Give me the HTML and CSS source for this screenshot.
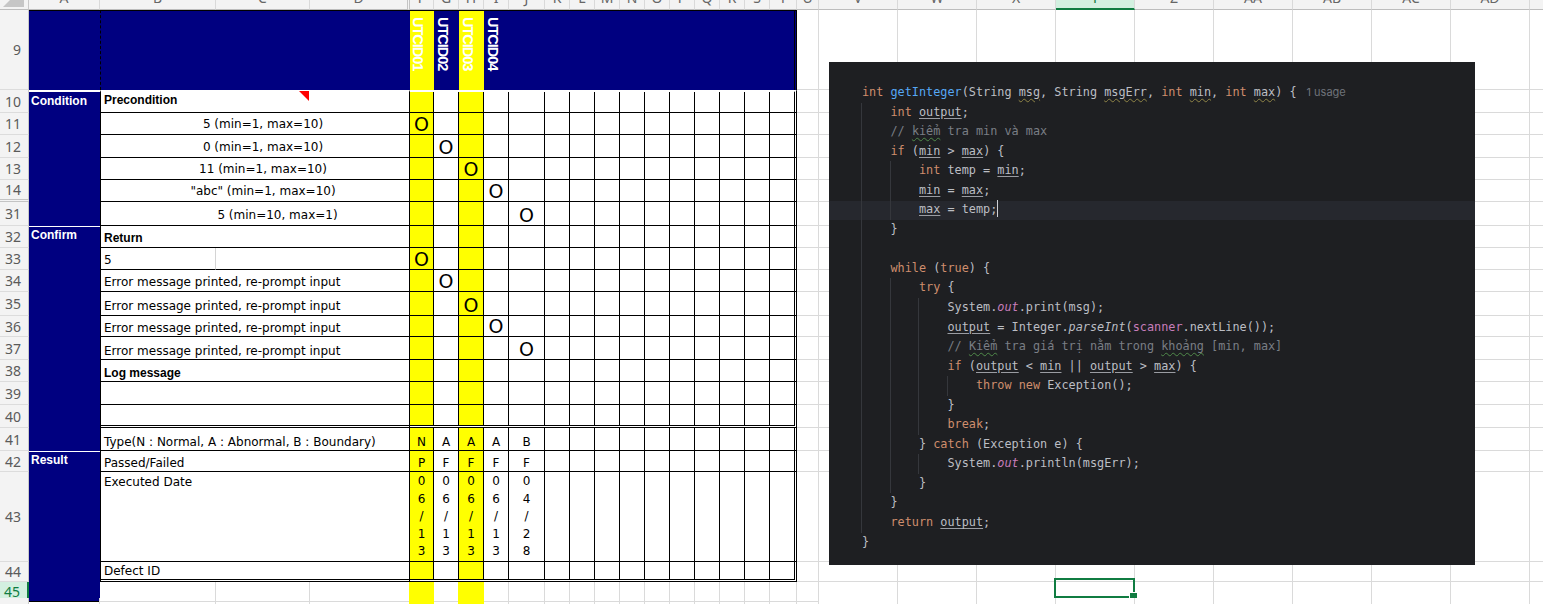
FILE: index.html
```html
<!DOCTYPE html>
<html>
<head>
<meta charset="utf-8">
<link rel="stylesheet" href="styles.css">
</head>
<body>
<div class="sheet">
  <div class="row hdr">
    <div class="corner"><svg width="29" height="10" viewBox="0 0 29 10"><polygon points="3,7 24,7 24,-14" fill="#c6c6c6"/></svg></div>
    <div class="ch"><span>A</span></div><div class="ch"><span>B</span></div><div class="ch"><span>C</span></div><div class="ch hid"><span>D</span></div>
    <div class="ch"><span>F</span></div><div class="ch"><span>G</span></div><div class="ch"><span>H</span></div><div class="ch"><span>I</span></div><div class="ch"><span>J</span></div>
    <div class="ch"><span>K</span></div><div class="ch"><span>L</span></div><div class="ch"><span>M</span></div><div class="ch"><span>N</span></div><div class="ch"><span>O</span></div>
    <div class="ch"><span>P</span></div><div class="ch"><span>Q</span></div><div class="ch"><span>R</span></div><div class="ch"><span>S</span></div><div class="ch"><span>T</span></div>
    <div class="ch"><span>U</span></div><div class="ch"><span>V</span></div><div class="ch"><span>W</span></div><div class="ch"><span>X</span></div><div class="ch on"><span>Y</span></div>
    <div class="ch"><span>Z</span></div><div class="ch"><span>AA</span></div><div class="ch"><span>AB</span></div><div class="ch"><span>AC</span></div><div class="ch"><span>AD</span></div><div class="ch"><span>AE</span></div>
  </div>

  <div class="row h80">
    <div class="rh">9</div>
    <div class="nv tt"></div>
    <div class="nv tt pbrk s3"></div>
    <div class="m9"><span class="vt">UTCID01</span><span class="vt">UTCID02</span><span class="vt">UTCID03</span><span class="vt">UTCID04</span></div>
    <div class="gl"></div><div class="rest"></div>
  </div>

  <div class="row h23">
    <div class="rh">10</div>
    <div class="nv lab w2">Condition</div>
    <div class="cl bl w2 bold pb4">Precondition</div>
    <div class="cl w2 cmt"></div>
    <div class="cl br w2"></div>
    <div class="m w2"><i></i><i></i><i></i><i></i><i></i><i></i><i></i><i></i><i></i><i></i><i></i><i></i><i></i><i></i><i></i></div>
    <div class="gl"></div><div class="rest"></div>
  </div>

  <div class="row h22">
    <div class="rh">11</div>
    <div class="nv"></div>
    <div class="cl bd ctr pb2">5 (min=1, max=10)</div>
    <div class="m"><i class="o">O</i><i></i><i></i><i></i><i></i><i></i><i></i><i></i><i></i><i></i><i></i><i></i><i></i><i></i><i></i></div>
    <div class="gl"></div><div class="rest"></div>
  </div>

  <div class="row h23">
    <div class="rh">12</div>
    <div class="nv"></div>
    <div class="cl bd ctr pb2">0 (min=1, max=10)</div>
    <div class="m"><i></i><i class="o">O</i><i></i><i></i><i></i><i></i><i></i><i></i><i></i><i></i><i></i><i></i><i></i><i></i><i></i></div>
    <div class="gl"></div><div class="rest"></div>
  </div>

  <div class="row h22">
    <div class="rh">13</div>
    <div class="nv"></div>
    <div class="cl bd ctr pb2">11 (min=1, max=10)</div>
    <div class="m"><i></i><i></i><i class="o">O</i><i></i><i></i><i></i><i></i><i></i><i></i><i></i><i></i><i></i><i></i><i></i><i></i></div>
    <div class="gl"></div><div class="rest"></div>
  </div>

  <div class="row h22">
    <div class="rh dbl">14</div>
    <div class="nv"></div>
    <div class="cl bd ctr pb2">"abc" (min=1, max=10)</div>
    <div class="m"><i></i><i></i><i></i><i class="o">O</i><i></i><i></i><i></i><i></i><i></i><i></i><i></i><i></i><i></i><i></i><i></i></div>
    <div class="gl"></div><div class="rest"></div>
  </div>

  <div class="row h24">
    <div class="rh">31</div>
    <div class="nv"></div>
    <div class="cl bd ctr2 pb2">5 (min=10, max=1)</div>
    <div class="m"><i></i><i></i><i></i><i></i><i class="o">O</i><i></i><i></i><i></i><i></i><i></i><i></i><i></i><i></i><i></i><i></i></div>
    <div class="gl"></div><div class="rest"></div>
  </div>

  <div class="row h22">
    <div class="rh">32</div>
    <div class="nv lab w1">Confirm</div>
    <div class="cl bd bold">Return</div>
    <div class="m"><i></i><i></i><i></i><i></i><i></i><i></i><i></i><i></i><i></i><i></i><i></i><i></i><i></i><i></i><i></i></div>
    <div class="gl"></div><div class="rest"></div>
  </div>

  <div class="row h22">
    <div class="rh">33</div>
    <div class="nv"></div>
    <div class="cl bl gr">5</div>
    <div class="cl br s2"></div>
    <div class="m"><i class="o">O</i><i></i><i></i><i></i><i></i><i></i><i></i><i></i><i></i><i></i><i></i><i></i><i></i><i></i><i></i></div>
    <div class="gl"></div><div class="rest"></div>
  </div>

  <div class="row h22">
    <div class="rh">34</div>
    <div class="nv"></div>
    <div class="cl bd">Error message printed, re-prompt input</div>
    <div class="m"><i></i><i class="o">O</i><i></i><i></i><i></i><i></i><i></i><i></i><i></i><i></i><i></i><i></i><i></i><i></i><i></i></div>
    <div class="gl"></div><div class="rest"></div>
  </div>

  <div class="row h24">
    <div class="rh">35</div>
    <div class="nv"></div>
    <div class="cl bd">Error message printed, re-prompt input</div>
    <div class="m"><i></i><i></i><i class="o">O</i><i></i><i></i><i></i><i></i><i></i><i></i><i></i><i></i><i></i><i></i><i></i><i></i></div>
    <div class="gl"></div><div class="rest"></div>
  </div>

  <div class="row h21">
    <div class="rh">36</div>
    <div class="nv"></div>
    <div class="cl bd pb0">Error message printed, re-prompt input</div>
    <div class="m"><i></i><i></i><i></i><i class="o">O</i><i></i><i></i><i></i><i></i><i></i><i></i><i></i><i></i><i></i><i></i><i></i></div>
    <div class="gl"></div><div class="rest"></div>
  </div>

  <div class="row h23">
    <div class="rh">37</div>
    <div class="nv"></div>
    <div class="cl bd pb0">Error message printed, re-prompt input</div>
    <div class="m"><i></i><i></i><i></i><i></i><i class="o">O</i><i></i><i></i><i></i><i></i><i></i><i></i><i></i><i></i><i></i><i></i></div>
    <div class="gl"></div><div class="rest"></div>
  </div>

  <div class="row h22">
    <div class="rh">38</div>
    <div class="nv"></div>
    <div class="cl bd bold pb0">Log message</div>
    <div class="m"><i></i><i></i><i></i><i></i><i></i><i></i><i></i><i></i><i></i><i></i><i></i><i></i><i></i><i></i><i></i></div>
    <div class="gl"></div><div class="rest"></div>
  </div>

  <div class="row h23">
    <div class="rh">39</div>
    <div class="nv"></div>
    <div class="cl bd"></div>
    <div class="m"><i></i><i></i><i></i><i></i><i></i><i></i><i></i><i></i><i></i><i></i><i></i><i></i><i></i><i></i><i></i></div>
    <div class="gl"></div><div class="rest"></div>
  </div>

  <div class="row h23">
    <div class="rh">40</div>
    <div class="nv"></div>
    <div class="cl bd db"></div>
    <div class="m db"><i></i><i></i><i></i><i></i><i></i><i></i><i></i><i></i><i></i><i></i><i></i><i></i><i></i><i></i><i></i></div>
    <div class="gl"></div><div class="rest"></div>
  </div>

  <div class="row h23">
    <div class="rh">41</div>
    <div class="nv"></div>
    <div class="cl bd pb0">Type(N : Normal, A : Abnormal, B : Boundary)</div>
    <div class="m tc"><i>N</i><i>A</i><i>A</i><i>A</i><i>B</i><i></i><i></i><i></i><i></i><i></i><i></i><i></i><i></i><i></i><i></i></div>
    <div class="gl"></div><div class="rest"></div>
  </div>

  <div class="row h21">
    <div class="rh">42</div>
    <div class="nv lab w1">Result</div>
    <div class="cl bd pb0">Passed/Failed</div>
    <div class="m tc"><i>P</i><i>F</i><i>F</i><i>F</i><i>F</i><i></i><i></i><i></i><i></i><i></i><i></i><i></i><i></i><i></i><i></i></div>
    <div class="gl"></div><div class="rest"></div>
  </div>

  <div class="row h90">
    <div class="rh">43</div>
    <div class="nv"></div>
    <div class="cl bd top">Executed Date</div>
    <div class="m dt"><i><span>06/13</span></i><i><span>06/13</span></i><i><span>06/13</span></i><i><span>06/13</span></i><i><span>04/28</span></i><i></i><i></i><i></i><i></i><i></i><i></i><i></i><i></i><i></i><i></i></div>
    <div class="gl"></div><div class="rest"></div>
  </div>

  <div class="row h20">
    <div class="rh">44</div>
    <div class="nv"></div>
    <div class="cl bd db pb0">Defect ID</div>
    <div class="m db"><i></i><i></i><i></i><i></i><i></i><i></i><i></i><i></i><i></i><i></i><i></i><i></i><i></i><i></i><i></i></div>
    <div class="gl"></div><div class="rest"></div>
  </div>

  <div class="row h16">
    <div class="rh on">45</div>
    <div class="nv bk"></div>
    <div class="g"></div><div class="g"></div><div class="g ny"></div>
    <div class="mg"><i></i><i></i><i></i><i></i><i></i><i></i><i></i><i></i><i></i><i></i><i></i><i></i><i></i><i></i><i></i></div>
    <div class="gl"></div><div class="rest"><div class="selbox"></div></div>
  </div>

  <div class="row h22">
    <div class="rh">46</div>
    <div class="g"></div>
    <div class="g"></div><div class="g"></div><div class="g ny"></div>
    <div class="mg"><i></i><i></i><i></i><i></i><i></i><i></i><i></i><i></i><i></i><i></i><i></i><i></i><i></i><i></i><i></i></div>
    <div class="gl"></div><div class="rest"></div>
  </div>

  <div class="code">
    <div class="curline"></div>
    <div class="ln"><span class="k">int</span> <span class="fn">getInteger</span>(String <span class="w">msg</span>, String <span class="w">msgErr</span>, <span class="k">int</span> <span class="w">min</span>, <span class="k">int</span> <span class="w">max</span>) {<span class="hint">1 usage</span></div>
    <div class="blk">
      <div class="ln"><span class="k">int</span> <span class="u">output</span>;</div>
      <div class="ln"><span class="cm">// <span class="gw">kiểm</span> tra min và max</span></div>
      <div class="ln"><span class="k">if</span> (<span class="u">min</span> &gt; <span class="u">max</span>) {</div>
      <div class="blk">
        <div class="ln"><span class="k">int</span> temp = <span class="u">min</span>;</div>
        <div class="ln"><span class="u">min</span> = <span class="u">max</span>;</div>
        <div class="ln"><span class="u">max</span> = temp;<span class="caret"></span></div>
      </div>
      <div class="ln">}</div>
      <div class="ln"> </div>
      <div class="ln"><span class="k">while</span> (<span class="k">true</span>) {</div>
      <div class="blk">
        <div class="ln"><span class="k">try</span> {</div>
        <div class="blk">
          <div class="ln">System.<span class="fd it">out</span>.print(msg);</div>
          <div class="ln"><span class="u">output</span> = Integer.<span class="it">parseInt</span>(<span class="fd">scanner</span>.nextLine());</div>
          <div class="ln"><span class="cm">// <span class="gw">Kiểm</span> tra giá trị nằm trong <span class="gw">khoảng</span> [min, max]</span></div>
          <div class="ln"><span class="k">if</span> (<span class="u">output</span> &lt; <span class="u">min</span> || <span class="u">output</span> &gt; <span class="u">max</span>) {</div>
          <div class="blk">
            <div class="ln"><span class="k">throw new</span> Exception();</div>
          </div>
          <div class="ln">}</div>
          <div class="ln"><span class="k">break</span>;</div>
        </div>
        <div class="ln">} <span class="k">catch</span> (Exception e) {</div>
        <div class="blk">
          <div class="ln">System.<span class="fd it">out</span>.println(msgErr);</div>
        </div>
        <div class="ln">}</div>
      </div>
      <div class="ln">}</div>
      <div class="ln"><span class="k">return</span> <span class="u">output</span>;</div>
    </div>
    <div class="ln">}</div>
  </div>
</div>
</body>
</html>
```

FILE: styles.css
```css
* { box-sizing: border-box; margin: 0; padding: 0; }
html, body { width: 1543px; height: 604px; overflow: hidden; background: #fff; }
body { font-family: "DejaVu Sans", sans-serif; font-size: 12px; color: #000; }

.sheet { position: relative; width: 1543px; height: 604px; overflow: hidden; }

.row {
  display: grid;
  grid-template-columns: 29px 71px 116px 94px 100px 24px 25px 25px 25px 36px repeat(9, 25px) 27px 22px repeat(10, 79px);
}
.hdr { height: 10px; }
.h80 { height: 80px; } .h24 { height: 24px; } .h23 { height: 23px; } .h22 { height: 22px; }
.h21 { height: 21px; } .h20 { height: 20px; } .h16 { height: 16px; } .h90 { height: 90px; }

/* column header */
.corner { background: #f3f3f3; border-right: 1px solid #c8c8c8; border-bottom: 1px solid #bdbdbd; overflow: hidden; }
.corner svg { display: block; }
.ch {
  background: #f3f3f3; border-right: 1px solid #d9d9d9; border-bottom: 1px solid #bdbdbd;
  overflow: hidden; text-align: center;
  font-family: "Noto Sans", sans-serif; font-size: 14px; color: #666;
}
.ch span { display: block; line-height: 14px; margin-top: -9px; }
.ch.hid { border-right: 3px double #c4c4c4; }
.ch.on { background: #d3f0e0; border-bottom: 2px solid #107c41; color: #107c41; }

/* row header */
.rh {
  background: #f3f3f3; border-right: 1px solid #c8c8c8; border-bottom: 1px solid #dcdcdc;
  display: flex; align-items: center; justify-content: flex-end; padding-right: 7px;
  font-family: "Noto Sans", sans-serif; font-size: 14px; color: #5a5a5a;
}
.rh.dbl { border-bottom: 3px double #c4c4c4; }
.rh.on { background: #d3f0e0; color: #107c41; border-right: 2px solid #107c41; }

/* sheet gridlines outside the table */
.gl { border-right: 1px solid #dadada; border-bottom: 1px solid #dadada; }
.rest {
  grid-column: 22 / -1; position: relative;
  border-bottom: 1px solid #dadada;
  background: repeating-linear-gradient(to right, #fff 0 78px, #dadada 78px 79px);
}
.g { border-right: 1px solid #dadada; border-bottom: 1px solid #dadada; }
.g.ny { border-right-color: #ff0; }

/* table */
.nv { background: #000080; }
.tt { border-top: 1px solid #000; }
.s3 { grid-column: span 3; }
.s2 { grid-column: span 2; }
.pbrk { border-left: 1px dashed #000; }
.bk { border-bottom: 1px solid #000; }
.w2 { border-top: 2px solid #fff; }
.w1 { border-top: 1px solid #fff; }
.lab {
  color: #fff; font-family: "Liberation Sans", sans-serif; font-weight: bold; font-size: 12px;
  line-height: 15px; padding: 1px 0 0 2px;
}
.lab.w2 { padding-top: 2px; }

.cl {
  position: relative;
  border-bottom: 1px solid #000;
  display: flex; align-items: flex-end;
  padding: 0 3px 1px; line-height: 15px; white-space: nowrap;
}
.bd { grid-column: span 3; border-left: 1px solid #000; border-right: 1px solid #000; }
.bl { border-left: 1px solid #000; }
.br { border-right: 1px solid #000; }
.gr { border-right: 1px solid #d4d4d4; }
.cl.db { border-bottom: 3px double #000; }
.ctr { justify-content: center; padding-left: 19px; }
.ctr2 { justify-content: center; padding-left: 48px; }
.pb0 { padding-bottom: 0; }
.pb2 { padding-bottom: 2px; }
.pb4 { padding-bottom: 4px; }
.cl.top { align-items: flex-start; padding-top: 3px; }
.bold { font-family: "Liberation Sans", sans-serif; font-weight: bold; font-size: 12px; }
.cmt::after {
  content: ""; position: absolute; right: 1px; top: -1px;
  border-top: 10px solid #f00; border-left: 10px solid transparent;
}

.m, .m9, .mg {
  grid-column: 6 / 21;
  display: grid;
  grid-template-columns: 24px 25px 25px 25px 36px repeat(9, 25px) 1fr;
}
.m { border-right: 3px double #000; border-bottom: 1px solid #000; }
.m.db { border-bottom: 3px double #000; }
.m > i {
  font-style: normal; border-right: 1px solid #000;
  display: flex; justify-content: center; align-items: flex-end;
  line-height: 15px; padding-bottom: 1px;
}
.m > i:last-child { border-right: 0; }
.m > i:nth-child(1), .m > i:nth-child(3) { background: #ff0; }
.m > i.o { font-size: 19px; line-height: 19px; padding-bottom: 0; }
.m.tc > i { padding-bottom: 0; }
.m.dt > i { align-items: flex-start; padding: 1px 0 0; line-height: 17.5px; }
.m.dt > i span { display: block; width: 1ch; word-break: break-all; line-break: anywhere; overflow-wrap: anywhere; text-align: center; }

.m9 { background: #000080; border-top: 1px solid #000; border-right: 3px double #000; }
.m9 > :nth-child(1), .m9 > :nth-child(3) { background: #ff0; }
.vt {
  writing-mode: vertical-rl; padding: 6px 8px 0 0;
  color: #fff; font-family: "Liberation Sans", sans-serif; font-weight: bold; font-size: 14.5px;
  letter-spacing: -1px; line-height: 16px;
}

.mg > i { font-style: normal; border-right: 1px solid #dadada; border-bottom: 1px solid #dadada; }
.mg > i:nth-child(1), .mg > i:nth-child(3) { background: #ff0; border-color: #ff0; }
.mg > i:nth-child(2) { border-right-color: #ff0; }

.selbox {
  position: absolute; left: 235px; top: -4px; width: 81px; height: 20px;
  border: 2px solid #107c41;
}
.selbox::after {
  content: ""; position: absolute; right: -5px; bottom: -5px; width: 7px; height: 7px;
  background: #107c41; border: 1px solid #fff;
}

/* code screenshot */
.code {
  position: absolute; left: 829px; top: 62px; width: 646px; height: 503px; z-index: 0;
  background: #1e1f22; padding: 21px 0 0 33px; overflow: hidden;
  font-family: "DejaVu Sans Mono", monospace; font-size: 11.83px; line-height: 19.56px; color: #bcbec4;
}
.curline { position: absolute; left: 0; right: 0; top: 138.5px; height: 19.6px; background: #26282e; z-index: -1; }
.ln { white-space: pre; height: 19.56px; }
.blk { margin-left: -1px; border-left: 1px solid #35373c; padding-left: 28.5px; }
.k { color: #cf8e6d; }
.fn { color: #56a8f5; }
.cm { color: #7a7e85; }
.fd { color: #c77dbb; }
.it { font-style: italic; }
.u { text-decoration: underline; text-decoration-color: #9a9ca2; text-underline-offset: 2px; }
.w { text-decoration: underline wavy #8f8446; text-underline-offset: 2px; text-decoration-thickness: 1px; }
.gw { text-decoration: underline wavy #4f8a4a; text-underline-offset: 2px; text-decoration-thickness: 1px; }
.hint { font-family: "Inter", sans-serif; font-size: 11px; color: #6f737a; margin-left: 10px; }
.caret { display: inline-block; width: 1px; height: 17px; background: #ced0d6; vertical-align: -4px; }
```
